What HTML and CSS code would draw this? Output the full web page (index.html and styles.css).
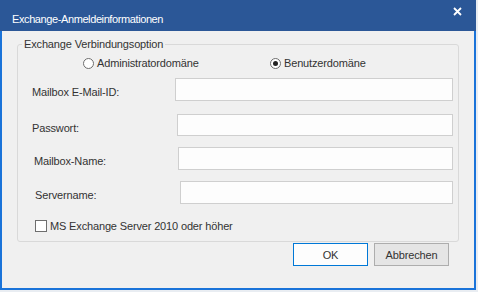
FILE: index.html
```html
<!DOCTYPE html>
<html lang="de">
<head>
    <meta charset="UTF-8">
    <title>Exchange-Anmeldeinformationen</title>
    <link rel="stylesheet" href="styles.css">
</head>
<body>
    <div class="window">
        <div class="titlebar">
            <span class="title">Exchange-Anmeldeinformationen</span>
            <svg class="close" width="9" height="9" viewBox="0 0 9 9">
                <path d="M1 1 L8 8 M8 1 L1 8" stroke="#fff" stroke-width="1.8" fill="none"/>
            </svg>
        </div>

        <div class="content">
            <fieldset class="group">
                <legend>Exchange Verbindungsoption</legend>

                <div class="radios">
                    <label class="radio radio-admin"><span class="dot"></span>Administratordomäne</label>
                    <label class="radio radio-user"><span class="dot checked"></span>Benutzerdomäne</label>
                </div>

                <div class="row row-mail">
                    <span class="label">Mailbox E-Mail-ID:</span>
                    <input type="text" class="field">
                </div>
                <div class="row row-pass">
                    <span class="label">Passwort:</span>
                    <input type="password" class="field">
                </div>
                <div class="row row-name">
                    <span class="label">Mailbox-Name:</span>
                    <input type="text" class="field">
                </div>
                <div class="row row-server">
                    <span class="label">Servername:</span>
                    <input type="text" class="field">
                </div>

                <label class="check"><span class="box"></span>MS Exchange Server 2010 oder höher</label>
            </fieldset>

            <div class="buttons">
                <button class="btn btn-ok">OK</button>
                <button class="btn">Abbrechen</button>
            </div>
        </div>
    </div>
</body>
</html>
```

FILE: styles.css
```css
body {
    margin: 0;
    background: #e9edf2;
    font-family: 'Liberation Sans', Arial, sans-serif;
    font-size: 11px;
    letter-spacing: -0.15px;
    color: #222;
}

.window {
    width: 476px;
    height: 290px;
    display: flex;
    flex-direction: column;
    background: #f0f0f0;
}

/* Title bar */
.titlebar {
    height: 31px;
    flex: none;
    background: #2b5797;
    color: #fff;
    display: flex;
    align-items: center;
    padding: 0 14px 0 12px;
    justify-content: space-between;
}

.title {
    font-size: 11px;
    letter-spacing: -0.4px;
    margin-top: 7px;
}

.close {
    margin-top: -8px;
}

.content {
    flex: 1;
    border: 2px solid #1a73d9;
    border-top: none;
    display: flex;
    flex-direction: column;
}

/* Group box */
.group {
    margin: 6px 15px 0 15px;
    padding: 0 0 5px 0;
    border: 1px solid #d9d9d9;
    border-radius: 3px;
    min-width: 0;
    height: 205px;
    box-sizing: border-box;
}

.group legend {
    margin-left: 4px;
    padding: 0 2px;
    font-size: 11px;
    line-height: 14px;
    color: #333;
}

.radios {
    display: flex;
    height: 16px;
    margin-top: 4px;
    align-items: center;
}

.radio {
    display: flex;
    align-items: center;
    color: #333;
}

.radio-admin {
    margin-left: 65px;
    width: 187px;
}

.dot {
    width: 11px;
    height: 11px;
    border: 1px solid #6e6e6e;
    border-radius: 50%;
    background: #fff;
    margin-right: 3px;
    box-sizing: border-box;
    display: flex;
    align-items: center;
    justify-content: center;
}

.dot.checked::after {
    content: '';
    width: 5px;
    height: 5px;
    border-radius: 50%;
    background: #222;
}

/* Form rows */
.row {
    display: flex;
    align-items: center;
    margin-right: 5px;
}

.row-mail { margin-top: 7px; }
.row-pass { margin-top: 13px; }
.row-name { margin-top: 11px; }
.row-server { margin-top: 11px; }

.label {
    color: #333;
    margin-top: 5px;
}

.field {
    height: 23px;
    box-sizing: border-box;
    border: 1px solid #cfcfcf;
    background: #fdfdfd;
    margin-left: auto;
    padding: 0 4px;
    outline: none;
}

.row-mail .label { margin-left: 14px; }
.row-mail .field { width: 278px; }
.row-pass .label { margin-left: 14px; }
.row-pass .field { width: 276px; height: 22px; }
.row-name .label { margin-left: 16px; }
.row-name .field { width: 275px; }
.row-server .label { margin-left: 17px; }
.row-server .field { width: 273px; }

.check {
    display: flex;
    align-items: center;
    margin: 16px 0 0 17px;
    color: #333;
}

.box {
    width: 12px;
    height: 12px;
    box-sizing: border-box;
    border: 1px solid #6e6e6e;
    background: #fff;
    margin-right: 3px;
}

/* Buttons */
.buttons {
    display: flex;
    justify-content: flex-end;
    gap: 6px;
    padding: 1px 25px 0 0;
}

.btn {
    width: 75px;
    height: 23px;
    font-family: 'Liberation Sans', Arial, sans-serif;
    font-size: 11px;
    letter-spacing: -0.15px;
    color: #333;
    border: 1px solid #adadad;
    background: #e5e5e5;
    padding: 0;
}

.btn-ok {
    border-color: #0078d7;
    background: #fdfdfd;
}
```
